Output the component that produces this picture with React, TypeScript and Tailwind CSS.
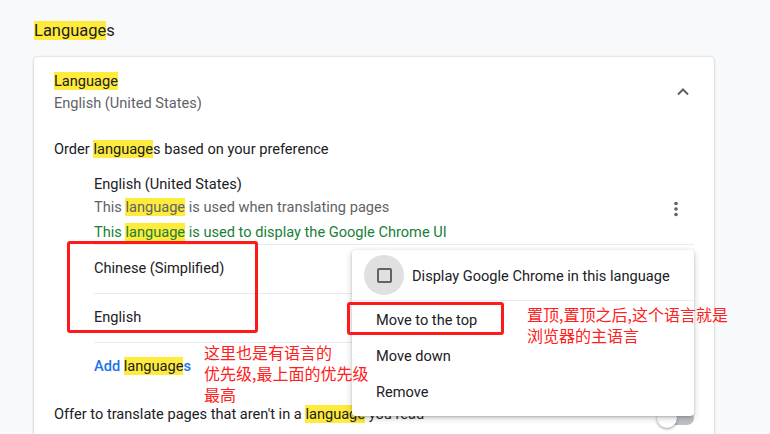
import React from "react";

const Hl = ({ children }: { children: React.ReactNode }) => (
  <span className="bg-[#ffeb3b]">{children}</span>
);

export default function App() {
  return (
    <div
      className="relative w-[770px] h-[434px] overflow-hidden bg-[#f8f9fa] text-[#202124]"
      style={{ fontFamily: "Roboto, 'Noto Sans CJK SC', sans-serif" }}
    >
      <div className="pl-[34px] pt-[20px] h-[57px] text-[16.5px] leading-[22px]">
        <Hl>Language</Hl>s
      </div>
      <div className="ml-[34px] w-[680px] h-[400px] bg-white rounded-[4px] shadow-[0_0_2px_rgba(60,64,67,0.3),0_1px_3px_rgba(60,64,67,0.15)] text-[14.6px]">
        <div className="flex items-start pl-[20px] pr-[24px] pt-[13px] h-[79px]">
          <div className="flex-1 leading-[22px]">
            <div>
              <Hl>Language</Hl>
            </div>
            <div className="text-[#5f6368]">English (United States)</div>
          </div>
          <svg width="14" height="10" viewBox="0 0 14 10" className="mt-[17px]">
            <path d="M2 7.5 L7 2.5 L12 7.5" fill="none" stroke="#5f6368" strokeWidth="2" />
          </svg>
        </div>
        <div className="pl-[20px] pt-[2px] h-[37px] leading-[22px]">
          Order <Hl>language</Hl>s based on your preference
        </div>
        <div className="ml-[60px] mr-[20px]">
          <div className="flex items-center">
            <div className="flex-1">
              <div className="leading-[23px]">English (United States)</div>
              <div className="leading-[23px] text-[#5f6368]">
                This <Hl>language</Hl> is used when translating pages
              </div>
              <div className="leading-[23px] mt-[2px] text-[#188038]">
                This <Hl>language</Hl> is used to display the Google Chrome UI
              </div>
            </div>
            <svg width="4" height="16" viewBox="0 0 4 16" className="mr-[16px] mt-[1px]">
              <circle cx="2" cy="2.5" r="1.8" fill="#5f6368" />
              <circle cx="2" cy="8" r="1.8" fill="#5f6368" />
              <circle cx="2" cy="13.5" r="1.8" fill="#5f6368" />
            </svg>
          </div>
          <div className="border-t border-[#e8eaed] h-[49px] flex items-center">
            Chinese (Simplified)
          </div>
          <div className="border-t border-[#e8eaed] h-[49px] flex items-center">English</div>
          <div className="border-t border-[#e8eaed] h-[49px] flex items-center text-[#1a73e8] font-medium">
            <span>
              Add <span className="text-[#202124] font-normal bg-[#ffeb3b]">language</span>s
            </span>
          </div>
        </div>
        <div className="pl-[20px] pr-[20px] flex items-center h-[46px] pt-[1px]">
          <div className="flex-1">
            Offer to translate pages that aren't in a <Hl>language</Hl> you read
          </div>
          <div className="relative w-[34px] h-[14px] rounded-full bg-[#bdc1c6] mt-[6px]">
            <div className="absolute left-[-3px] top-[-3px] w-[20px] h-[20px] rounded-full bg-white shadow-[0_1px_3px_rgba(0,0,0,0.4)]" />
          </div>
        </div>
      </div>

      {/* Red annotation box 1 */}
      <div className="absolute left-[67px] top-[241px] w-[191px] h-[92px] border-[3px] border-[#ff1a1a] rounded-[3px]" />

      {/* Action menu */}
      <div className="absolute left-[352px] top-[250px] w-[342px] h-[166px] bg-white rounded-[4px] shadow-[0_2px_6px_rgba(60,64,67,0.3),0_1px_2px_rgba(60,64,67,0.2)] text-[14.6px] text-[#202124]">
        <div className="h-[51px] flex items-center border-b border-[#e8eaed]">
          <div className="ml-[12px] w-[40px] h-[40px] rounded-full bg-[#e0e0e0] flex items-center justify-center">
            <div className="w-[15px] h-[15px] border-2 border-[#5f6368] rounded-[2px]" />
          </div>
          <div className="ml-[8px] pt-[3px]">Display Google Chrome in this language</div>
        </div>
        <div className="pt-[2px]">
          <div className="h-[36px] flex items-center pl-[24px]">Move to the top</div>
          <div className="h-[36px] flex items-center pl-[24px]">Move down</div>
          <div className="h-[36px] flex items-center pl-[24px]">Remove</div>
        </div>
      </div>

      {/* Red annotation box 2 */}
      <div className="absolute left-[347px] top-[302px] w-[157px] h-[33px] border-[3px] border-[#ff1a1a] rounded-[3px]" />

      {/* Annotation texts */}
      <div
        className="absolute left-[204px] top-[342px] text-[16px] leading-[21px] text-[#ff2020]"
        style={{ fontFamily: "'Noto Sans CJK SC', sans-serif" }}
      >
        <div>这里也是有语言的</div>
        <div>优先级,最上面的优先级</div>
        <div>最高</div>
      </div>
      <div
        className="absolute left-[527px] top-[304px] text-[16px] leading-[21px] text-[#ff2020]"
        style={{ fontFamily: "'Noto Sans CJK SC', sans-serif" }}
      >
        <div>置顶,置顶之后,这个语言就是</div>
        <div>浏览器的主语言</div>
      </div>
    </div>
  );
}
